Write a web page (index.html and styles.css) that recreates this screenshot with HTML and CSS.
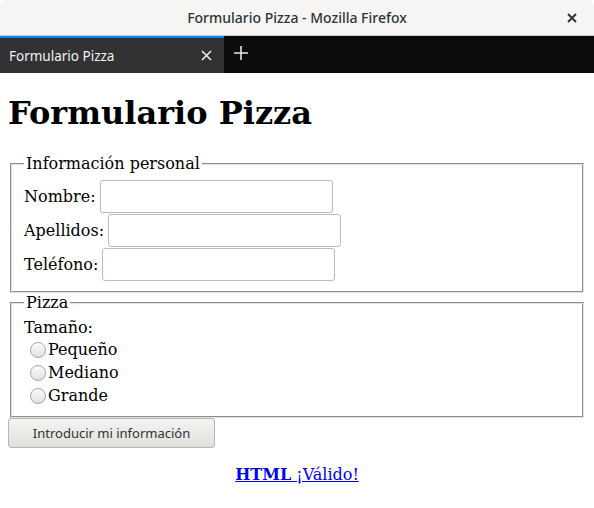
FILE: index.html
```html
<!DOCTYPE html>
<html lang="es">
<head>
<meta charset="utf-8">
<title>Formulario Pizza</title>
<link rel="stylesheet" href="styles.css">
</head>
<body>
<div class="titlebar">
  <span class="title">Formulario Pizza - Mozilla Firefox</span>
  <svg class="win-close" width="10" height="10" viewBox="0 0 10 10"><path d="M1 1L9 9M9 1L1 9" stroke="#2e3436" stroke-width="2"/></svg>
</div>
<div class="tabbar">
  <div class="tab">
    <span class="tab-title">Formulario Pizza</span>
    <svg class="tab-close" width="11" height="11" viewBox="0 0 11 11"><path d="M1 1L10 10M10 1L1 10" stroke="#ececec" stroke-width="1.6"/></svg>
  </div>
  <svg class="newtab" width="14" height="14" viewBox="0 0 14 14"><path d="M7 0V14M0 7H14" stroke="#e8e8e8" stroke-width="1.6"/></svg>
</div>
<main class="page">
  <h1 class="heading">Formulario Pizza</h1>
  <form class="form">
    <fieldset class="group">
      <legend class="legend">Información personal</legend>
      <div class="row"><label class="label" for="nombre">Nombre:</label><input class="field" type="text" id="nombre"></div>
      <div class="row"><label class="label" for="apellidos">Apellidos:</label><input class="field" type="text" id="apellidos"></div>
      <div class="row"><label class="label" for="tel">Teléfono:</label><input class="field" type="text" id="tel"></div>
    </fieldset>
    <fieldset class="group group-pizza">
      <legend class="legend">Pizza</legend>
      <div class="size-label">Tamaño:</div>
      <label class="radio-row"><input class="radio" type="radio" name="t">Pequeño</label>
      <label class="radio-row"><input class="radio" type="radio" name="t">Mediano</label>
      <label class="radio-row"><input class="radio" type="radio" name="t">Grande</label>
    </fieldset>
    <button class="submit" type="button">Introducir mi información</button>
  </form>
  <p class="valid"><a class="valid-link" href="#"><strong>HTML</strong> ¡Válido!</a></p>
</main>
</body>
</html>
```
FILE: styles.css
```css
html, body {
  margin: 0;
  padding: 0;
  background: #fff;
}
body {
  font-family: "DejaVu Serif", serif;
  font-size: 16px;
  color: #000;
}
.titlebar {
  height: 35px;
  background: #f6f5f4;
  border-bottom: 1px solid #cdc9c4;
  display: flex;
  align-items: center;
  justify-content: center;
  position: relative;
  border-radius: 6px 6px 0 0;
}
.title {
  font-family: "Noto Sans", sans-serif;
  font-size: 14px;
  font-weight: 500;
  color: #2e3436;
}
.win-close {
  position: absolute;
  right: 17px;
  top: 13px;
}
.tabbar {
  height: 37px;
  background: #0c0c0d;
  display: flex;
  align-items: stretch;
}
.tab {
  width: 224px;
  background: #323234;
  border-top: 2px solid #0a84ff;
  box-sizing: border-box;
  display: flex;
  align-items: center;
  padding: 0 9px;
  justify-content: space-between;
}
.tab-title {
  font-family: "Noto Sans", sans-serif;
  font-size: 13.5px;
  color: #f0f0f0;
}
.tab-close {
  margin-right: 3px;
}
.newtab {
  align-self: center;
  margin-left: 10px;
  margin-top: -4px;
}
.page {
  padding: 0 8px 8px;
}
.heading {
  font-size: 32px;
  font-weight: bold;
  margin: 21px 0 22px;
}
.form {
  margin: 0;
}
.group {
  margin: 0 2px;
  padding: 7px 12px 10px;
  border: 2px groove #e2e2e2;
}
.group-pizza {
  padding: 5px 12px 9px;
}
.legend {
  padding: 0 2px;
}
.row {
  display: flex;
  align-items: center;
  gap: 4px;
  height: 33px;
  margin-bottom: 1px;
}
.row:last-child {
  margin-bottom: 0;
}
.field {
  width: 233px;
  height: 33px;
  box-sizing: border-box;
  border: 1px solid #bcbcb8;
  border-radius: 3px;
  background: #fff;
  margin: 0;
}
.size-label {
  height: 21px;
  line-height: 21px;
}
.radio-row {
  display: flex;
  align-items: center;
  height: 23px;
}
.radio {
  appearance: none;
  width: 16px;
  height: 16px;
  margin: 0 2px 0 6px;
  border-radius: 50%;
  border: 1px solid #a7a7a3;
  background: linear-gradient(#fbfbfa, #e2e2df);
  box-sizing: border-box;
}
.submit {
  display: block;
  width: 207px;
  height: 30px;
  margin: 0;
  font-family: "Noto Sans", sans-serif;
  font-size: 13px;
  color: #2e3436;
  background: linear-gradient(#f4f4f2, #dfdfdc);
  border: 1px solid #b5b5b1;
  border-radius: 3px;
}
.valid {
  text-align: center;
  margin: 17px 0 16px;
}
.valid-link {
  color: #0000ee;
}
```
